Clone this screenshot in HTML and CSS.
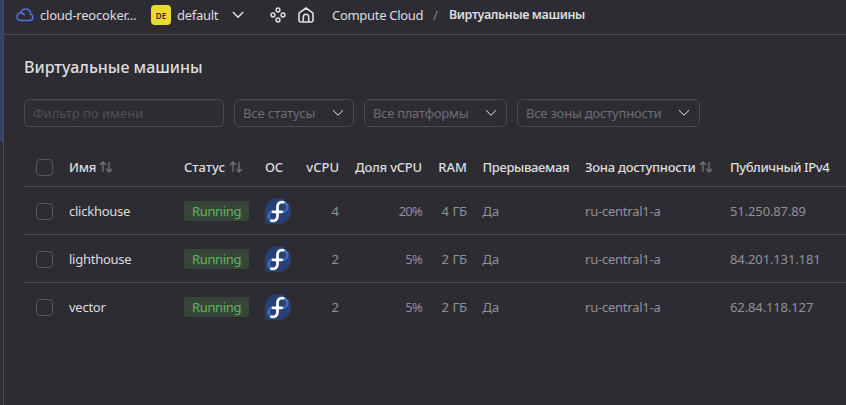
FILE: index.html
```html
<!DOCTYPE html>
<html lang="ru">
<head>
<meta charset="utf-8">
<title>Виртуальные машины</title>
<link rel="stylesheet" href="styles.css">
</head>
<body>
<svg width="0" height="0" class="defs">
  <symbol id="chev" viewBox="0 0 12 8"><path d="M1.200 1.500 6 6.200l4.800-4.700" fill="none" stroke="currentColor" stroke-linecap="round" stroke-linejoin="round"/></symbol>
  <symbol id="sort" viewBox="0 0 14 12"><path d="M4 11V1.200M1 4l3-3 3 3M10 1v9.800M7.500 8l2.500 3 3-3" fill="none" stroke="currentColor" stroke-width="1.300"/></symbol>
  <symbol id="fedora" viewBox="0 0 26 26">
    <path d="M13 0a13 13 0 1 1 0 26H2.500A2.500 2.500 0 0 1 0 23.500V13A13 13 0 0 1 13 0z" fill="#294172"/>
    <path d="M8 13.600a4.500 4.500 0 1 0 0 9a4.500 4.500 0 0 0 4.500-4.500M16.700 13.800a4.700 4.700 0 0 0 2.600-9" fill="none" stroke="#3c6eb4" stroke-width="2.600"/>
    <path d="M18.400 4.300c-3.300-.8-5.900 1-5.900 4.500v9.500c0 3.500-2.800 5.200-6.200 4.500M8 13.800h8.700" fill="none" stroke="#fff" stroke-width="2.700" stroke-linecap="round"/>
  </symbol>
</svg>
<div class="app">
  <aside class="rail"><div class="rail-fill"></div></aside>
  <div class="page">
    <header class="topbar">
      <svg class="cloud" viewBox="0 0 18 14" width="18" height="14"><path d="M4.300 12.500h9.200a3.300 3.300 0 0 0 1.100-6.400C14.700 3 12.600 1 9.900 1 7.500 1 5.600 2.500 5 4.800 2.700 4.800 1 6.500 1 8.800c0 2.100 1.500 3.700 3.300 3.700zM5 4.900c1.600 0 2.700.6 3.400 1.900" fill="none" stroke="#4d77dd" stroke-width="1.500" stroke-linecap="round"/></svg>
      <span class="cloud-name">cloud-reocoker...</span>
      <span class="folder-badge">DE</span>
      <span class="folder">default</span>
      <svg class="chev-top" viewBox="0 0 12 8" width="12" height="8"><path d="M1.300 1.500 6 6.200l4.700-4.700" fill="none" stroke="#dedede" stroke-width="1.600" stroke-linecap="round" stroke-linejoin="round"/></svg>
      <svg class="nodes" viewBox="0 0 16 16" width="16" height="16"><g fill="none" stroke="#dedede" stroke-width="1.500"><circle cx="8" cy="3" r="1.900"/><circle cx="8" cy="13" r="1.900"/><circle cx="3" cy="8" r="1.900"/><circle cx="13" cy="8" r="1.900"/></g></svg>
      <svg class="home" viewBox="0 0 16 16" width="16" height="16"><path d="M1 6.200 8 1l7 5.200V13a2 2 0 0 1-2 2H3a2 2 0 0 1-2-2zM5.300 14.800V10a2.700 2.700 0 0 1 5.400 0v4.800" fill="none" stroke="#dedede" stroke-width="1.600" stroke-linejoin="round"/></svg>
      <span class="crumb">Compute Cloud</span>
      <span class="slash">/</span>
      <span class="crumb-current">Виртуальные машины</span>
    </header>
    <main class="content">
      <h1>Виртуальные машины</h1>
      <div class="filters">
        <div class="field search">Фильтр по имени</div>
        <div class="field status-f"><span>Все статусы</span><svg width="12" height="8"><use href="#chev"/></svg></div>
        <div class="field platform-f"><span>Все платформы</span><svg width="12" height="8"><use href="#chev"/></svg></div>
        <div class="field zone-f"><span>Все зоны доступности</span><svg width="12" height="8"><use href="#chev"/></svg></div>
      </div>
      <div class="table">
        <div class="row head">
          <i class="check"></i>
          <div><span class="h-name">Имя</span><svg class="sort" width="14" height="12"><use href="#sort"/></svg></div>
          <div><span class="h-status">Статус</span><svg class="sort" width="14" height="12"><use href="#sort"/></svg></div>
          <div class="h-os">ОС</div>
          <div class="num">vCPU</div>
          <div class="num h-share">Доля vCPU</div>
          <div class="num h-ram">RAM</div>
          <div class="pre h-pre">Прерываемая</div>
          <div><span class="h-zone">Зона доступности</span><svg class="sort" width="14" height="12"><use href="#sort"/></svg></div>
          <div class="h-ip">Публичный IPv4</div>
        </div>
        <div class="row">
          <i class="check"></i><div class="name">clickhouse</div><div><span class="state">Running</span></div>
          <svg width="26" height="26"><use href="#fedora"/></svg>
          <div class="num">4</div><div class="num share">20%</div><div class="num ram">4 ГБ</div><div class="pre">Да</div><div class="zone">ru-central1-a</div><div class="ip">51.250.87.89</div>
        </div>
        <div class="row">
          <i class="check"></i><div class="name">lighthouse</div><div><span class="state">Running</span></div>
          <svg width="26" height="26"><use href="#fedora"/></svg>
          <div class="num">2</div><div class="num share">5%</div><div class="num ram">2 ГБ</div><div class="pre">Да</div><div class="zone">ru-central1-a</div><div class="ip">84.201.131.181</div>
        </div>
        <div class="row">
          <i class="check"></i><div class="name">vector</div><div><span class="state">Running</span></div>
          <svg width="26" height="26"><use href="#fedora"/></svg>
          <div class="num">2</div><div class="num share">5%</div><div class="num ram">2 ГБ</div><div class="pre">Да</div><div class="zone">ru-central1-a</div><div class="ip">62.84.118.127</div>
        </div>
      </div>
    </main>
  </div>
</div>
</body>
</html>
```
FILE: styles.css
```css
* { box-sizing: border-box; }
body { margin: 0; background: #2d2c33; color: #dedede; font: 13px/18px "Noto Sans", sans-serif; overflow: hidden; }
svg { display: block; flex: none; }
.defs { position: absolute; }
.app { display: flex; height: 405px; }
.rail { width: 4px; flex: none; border-right: 1px solid #4c4b53; }
.rail-fill { height: 143px; background: #38426a; border-bottom-left-radius: 3px; }
.page { flex: 1; min-width: 0; }
.topbar { display: flex; align-items: center; height: 35px; padding: 0 0 5px 12px; border-bottom: 1px solid #4c4b53; white-space: nowrap; }
.cloud-name { width: 104px; margin-left: 6px; margin-right: 7px; letter-spacing: -0.22px; }
.folder-badge { width: 20px; height: 20px; border-radius: 4px; background: #ecdb2d; color: #322d12; font-size: 8px; line-height: 22px; font-weight: 600; text-align: center; }
.folder { width: 42px; margin-left: 6px; letter-spacing: -0.3px; }
.chev-top { margin-left: 13px; }
.nodes { margin-left: 26px; }
.home { margin-left: 12px; }
.crumb { width: 92px; margin-left: 18px; letter-spacing: -0.3px; }
.slash { width: 6px; margin-left: 9px; color: #88878b; }
.crumb-current { margin-left: 10px; font-size: 12.5px; font-weight: 600; letter-spacing: -0.4px; }
.content { padding: 20px 0 0 20px; }
h1 { margin: 0; font-size: 16px; line-height: 24px; font-weight: 500; white-space: nowrap; }
.filters { display: flex; gap: 10px; margin-top: 20px; }
.field { display: flex; align-items: center; justify-content: space-between; height: 28px; padding: 0 9px 0 8px; border: 1px solid #4c4b53; border-radius: 6px; color: #6e6d72; white-space: nowrap; }
.field svg { color: #e6e6e6; }
.search { width: 200px; color: #505056; }
.status-f { width: 120px; letter-spacing: -0.1px; }
.platform-f { width: 143px; letter-spacing: -0.28px; }
.zone-f { width: 183px; letter-spacing: -0.2px; }
.table { margin-top: 21px; }
.row { display: grid; grid-template-columns: 45px 115px 81px 32px 42px 83px 45px 118px 145px 1fr; align-items: center; height: 48px; border-bottom: 1px solid #4c4b53; color: #929196; white-space: nowrap; }
.row:last-child { border-bottom: 0; padding-bottom: 1px; }
.head { height: 39px; color: #dedede; font-weight: 500; }
.head > div { display: flex; align-items: center; }
.check { width: 17px; height: 17px; margin: 1px 0 0 12px; border: 1px solid #56555c; border-radius: 4px; }
.head .check { margin-top: 0; }
.sort { margin-left: 4px; color: #737277; }
.name { color: #dedede; letter-spacing: -0.25px; }
.h-name { width: 26px; letter-spacing: -0.2px; }
.h-os { letter-spacing: -0.2px; }
.h-share { letter-spacing: -0.2px; }
.h-pre { letter-spacing: -0.35px; }
.h-zone { letter-spacing: -0.27px; }
.h-ip { letter-spacing: -0.42px; }
.num { text-align: right; }
.share { letter-spacing: -0.8px; }
.head > .num { justify-content: flex-end; }
.pre { padding-left: 15.5px; }
.zone { letter-spacing: -0.23px; }
.ip { letter-spacing: -0.12px; }
.state { display: block; width: 65px; height: 20px; padding-left: 8px; line-height: 20px; border-radius: 3px; background: #374539; color: #61b45f; letter-spacing: -0.35px; }
```
